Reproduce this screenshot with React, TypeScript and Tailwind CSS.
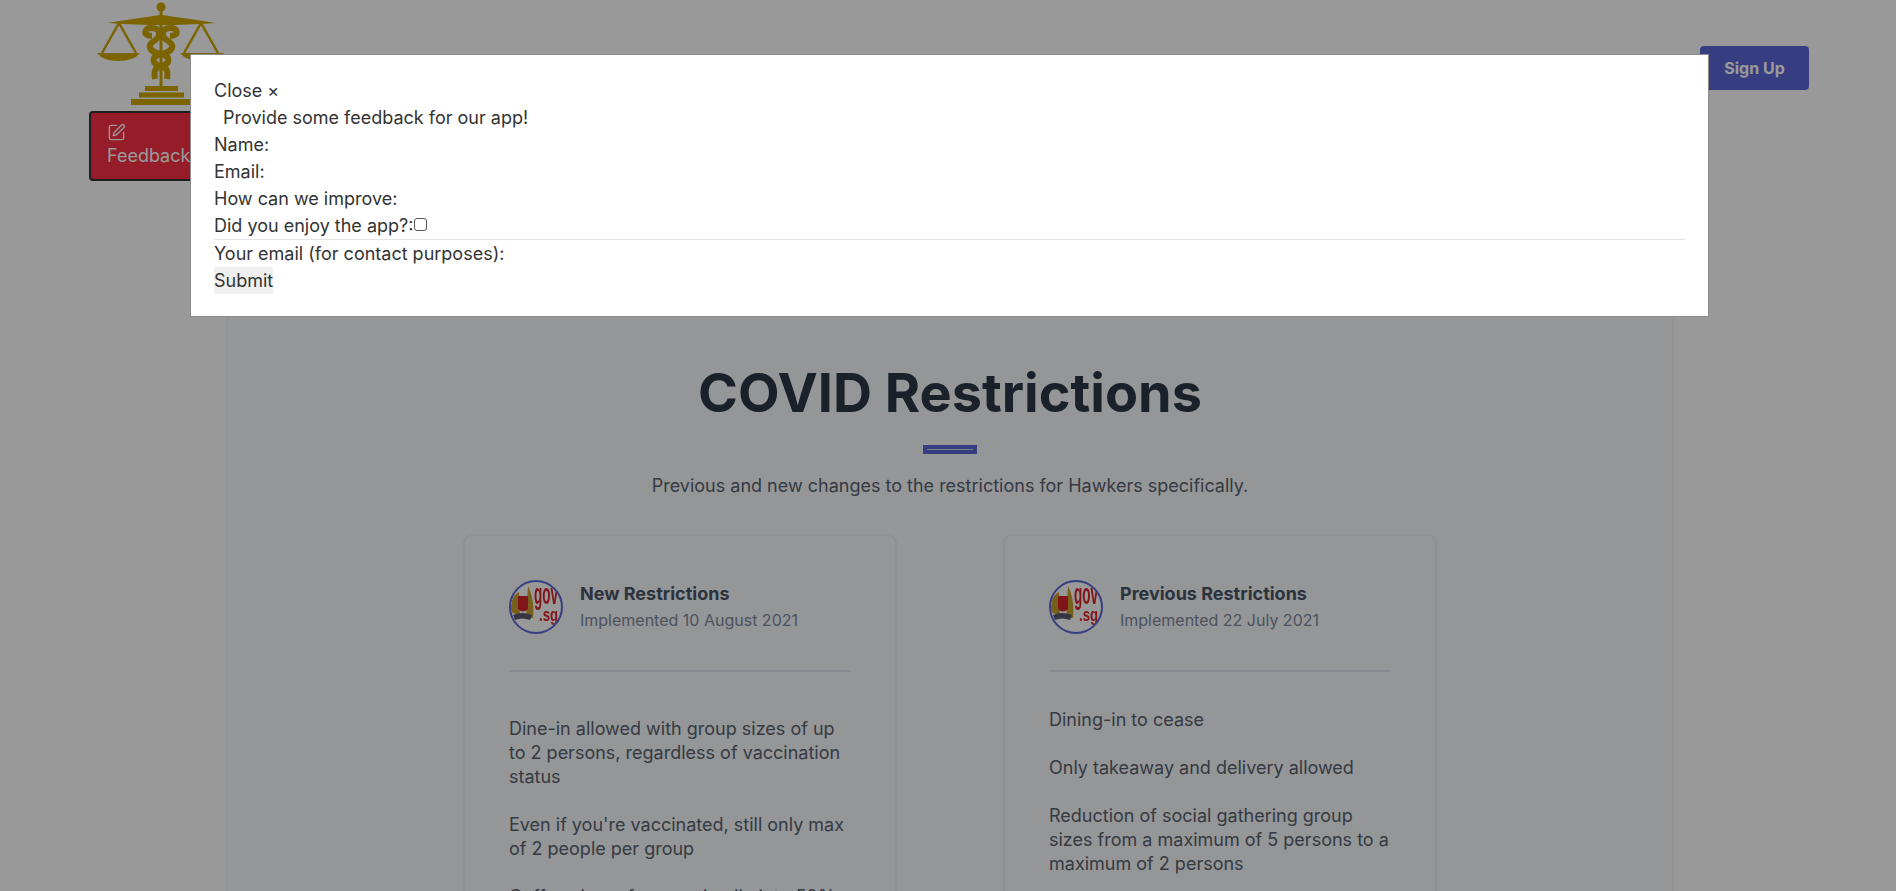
import { SquarePen } from "lucide-react";

const inter = "font-['Inter',sans-serif]";

// scales + staff logo, drawn in the gold of the original png
function Logo() {
  return (
    <svg viewBox="0 0 130 110" className="h-[110px] w-[130px]" fill="#cfa700">
      <circle cx="67" cy="7" r="4.5" />
      <rect x="65.5" y="10" width="3" height="76" />
      <path d="M13 23 Q45 18 66 15 L68 15 Q90 18 122 23 Q90 25 67 25 Q45 25 13 23Z" />
      <path d="M25 23 L8 53 M25 23 L42 53 M107 23 L90 53 M107 23 L124 53" stroke="#cfa700" strokeWidth="2.5" fill="none" />
      <path d="M3 53 H46 Q40 61 24 61 Q9 61 3 53Z" />
      <path d="M86 53 H130 Q124 61 108 61 Q92 61 86 53Z" />
      <path d="M58 36 C48 36 50 27 58 28 C66 28 68 36 60 41 C52 46 56 52 67 54 C78 57 76 64 67 66 C60 68 60 72 61 79" stroke="#cfa700" strokeWidth="6" fill="none" />
      <path d="M76 36 C86 36 84 27 76 28 C68 28 66 36 74 41 C82 46 78 52 67 54 C56 57 58 64 67 66 C74 68 74 72 73 79" stroke="#cfa700" strokeWidth="6" fill="none" />
      <rect x="51" y="86" width="33" height="5" />
      <rect x="45" y="92.5" width="45" height="5" />
      <rect x="37" y="99" width="60" height="6" />
    </svg>
  );
}

// the gov.sg crest avatar
function GovAvatar() {
  return (
    <div className="flex h-[54px] w-[54px] shrink-0 items-center justify-center overflow-hidden rounded-full border-2 border-[#5a67d8] bg-white">
      <svg viewBox="0 0 50 50" className="h-[50px] w-[50px] blur-[0.5px]">
        <path d="M0 30 Q-1 14 8 10 L9 34Z M17 4 Q24 18 22 36 L15 36Z" fill="#c9a030" />
        <path d="M7 14 H17 V27 Q12 32 7 27Z" fill="#d8262c" />
        <path d="M2 33 Q11 29 21 33 L19 38 Q11 35 4 38Z" fill="#5a5a70" />
        <text x="23" y="22" fontSize="30" fontWeight="700" fill="#d8262c" fontFamily="'Liberation Sans',sans-serif" textLength="24" lengthAdjust="spacingAndGlyphs">gov</text>
        <text x="28" y="39" fontSize="18" fontWeight="700" fill="#d8262c" fontFamily="'Liberation Sans',sans-serif" textLength="19" lengthAdjust="spacingAndGlyphs">.sg</text>
      </svg>
    </div>
  );
}

function RestrictionCard({ title, date, items, listTop }: { title: string; date: string; items: string[]; listTop: string }) {
  return (
    <div className="h-[800px] w-[432px] rounded-lg border border-[#edf2f7] bg-[#f7fafc] px-11 pt-11 shadow-sm">
      <div className="flex items-center border-b-2 border-[#e2e8f0] pb-9">
        <GovAvatar />
        <div className="ml-[17px] -translate-y-px">
          <p className="text-lg leading-[27px] font-bold text-[#4a5568]">{title}</p>
          <p className="text-base leading-[26px] text-[#808ba0]">{date}</p>
        </div>
      </div>
      <div className={`${listTop} flex flex-col gap-6 text-lg leading-6 text-[#5a6270]`}>
        {items.map((item) => (
          <p key={item}>{item}</p>
        ))}
      </div>
    </div>
  );
}

export default function App() {
  return (
    <div className={`relative h-[891px] overflow-hidden bg-white ${inter}`}>
      <header className="flex items-start justify-between pr-[87px] pl-[89px]">
        <div>
          <div className="pl-[5px]">
            <Logo />
          </div>
          <button className="mt-px h-[70px] w-[200px] rounded border-2 border-[#333] bg-[#f92f43] pl-4 text-left text-lg leading-[27px] text-white">
            <SquarePen className="h-[19px] w-[19px]" strokeWidth={1.75} />
            Feedback
          </button>
        </div>
        <button className="mt-[46px] h-11 w-[109px] rounded bg-[#5a67d8] text-base font-bold text-white">Sign Up</button>
      </header>

      <section className="mt-[69px] ml-[228px] h-[700px] w-[1444px] bg-[#f7fafc] pt-[111px] shadow-md">
        <h1 className="text-center text-[54px] leading-[64px] font-bold text-[#2d3748]">COVID Restrictions</h1>
        <div className="mx-auto mt-5 flex h-[9px] w-[54px] items-center justify-center bg-[#5a67d8] px-1">
          <div className="h-px w-full bg-[#cbd5e0]" />
        </div>
        <p className="mt-[18px] text-center text-lg leading-[27px] text-[#5a6270]">
          Previous and new changes to the restrictions for Hawkers specifically.
        </p>
        <div className="mt-9 flex justify-center gap-[108px]">
          <RestrictionCard
            title="New Restrictions"
            date="Implemented 10 August 2021"
            listTop="mt-[45px]"
            items={[
              "Dine-in allowed with group sizes of up to 2 persons, regardless of vaccination status",
              "Even if you're vaccinated, still only max of 2 people per group",
              "Coffee shops free seating limit to 50%",
            ]}
          />
          <RestrictionCard
            title="Previous Restrictions"
            date="Implemented 22 July 2021"
            listTop="mt-9"
            items={[
              "Dining-in to cease",
              "Only takeaway and delivery allowed",
              "Reduction of social gathering group sizes from a maximum of 5 persons to a maximum of 2 persons",
            ]}
          />
        </div>
      </section>

      {/* Feedback modal over a dimmed page */}
      <div className="fixed inset-0 z-10 bg-black/40">
        <div className="mt-[54px] ml-[190px] h-[263px] w-[1519px] border border-[#8c8c8c] bg-white px-[23px] pt-[22px] text-lg leading-[27px] text-[#333]">
          <p>Close ×</p>
          <p className="pl-[9px]">Provide some feedback for our app!</p>
          <p>Name:</p>
          <p>Email:</p>
          <p>How can we improve:</p>
          <p className="flex items-center">
            Did you enjoy the app?:
            <input type="checkbox" className="ml-px h-[13px] w-[13px] -translate-y-px appearance-none rounded-[3px] border border-[#555] bg-white" />
          </p>
          <hr className="border-[#e5e5e5]" />
          <p>Your email (for contact purposes):</p>
          <button className="block bg-[#efefef]">Submit</button>
        </div>
      </div>
    </div>
  );
}
